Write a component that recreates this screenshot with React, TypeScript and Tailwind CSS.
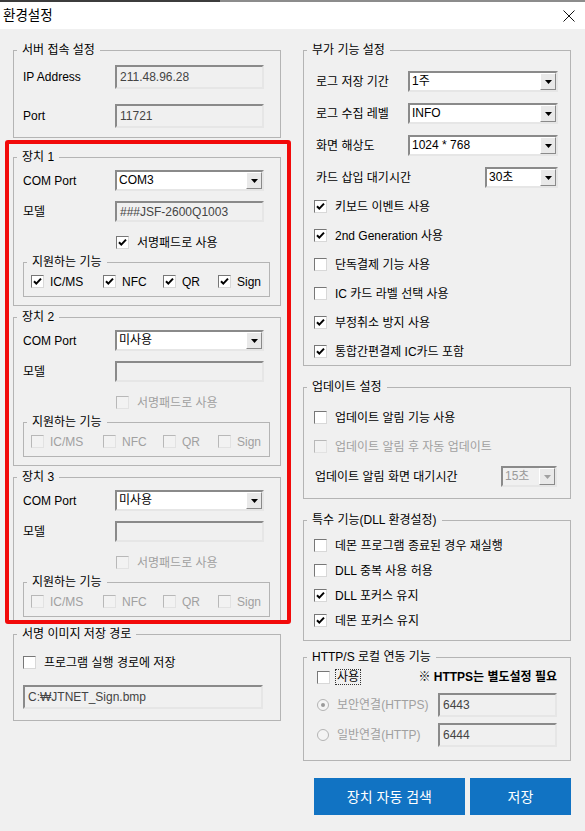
import React from 'react';

function GroupBox({ title, className = '', children }: { title: string; className?: string; children?: React.ReactNode }) {
  return (
    <div className={`relative border border-[#b4b4b4] ${className}`}>
      <span className="absolute left-[3px] top-[-8px] whitespace-nowrap bg-[#f0f0f0] px-[5px] leading-[14px]">{title}</span>
      {children}
    </div>
  );
}

function CheckBox({ checked = false, disabled = false }: { checked?: boolean; disabled?: boolean }) {
  return (
    <span
      className={`flex h-[13px] w-[13px] shrink-0 items-center justify-center border ${
        disabled
          ? 'border-t-[#b8b8b8] border-l-[#b8b8b8] border-b-[#e2e2e2] border-r-[#e2e2e2] bg-[#f2f2f2]'
          : 'border-t-[#777777] border-l-[#777777] border-b-[#d8d8d8] border-r-[#d8d8d8] bg-white'
      }`}
    >
      {checked && (
        <svg width="11" height="11" viewBox="0 0 11 11">
          <path d="M2 5.2 L4.3 7.6 L9 2.6" fill="none" stroke={disabled ? '#a0a0a0' : '#000'} strokeWidth="2" />
        </svg>
      )}
    </span>
  );
}

function Radio({ checked = false }: { checked?: boolean }) {
  return (
    <span className="flex h-[12px] w-[12px] shrink-0 items-center justify-center rounded-full border border-[#b4b4b4] bg-[#f4f4f4]">
      {checked && <span className="h-[4px] w-[4px] rounded-full bg-[#9a9a9a]" />}
    </span>
  );
}

function Select({ value, width, disabled = false }: { value: string; width: string; disabled?: boolean }) {
  return (
    <div
      className={`flex h-[21px] shrink-0 border-2 border-t-[#8a8a8a] border-l-[#8a8a8a] border-b-[#e6e6e6] border-r-[#e6e6e6] ${width} ${
        disabled ? 'bg-[#f0f0f0] text-[#9a9a9a]' : 'bg-white'
      }`}
    >
      <span className="flex-1 overflow-hidden whitespace-nowrap pl-[2px] leading-[17px]">{value}</span>
      <span className="flex w-[16px] items-center justify-center border border-t-white border-l-white border-b-[#8a8a8a] border-r-[#8a8a8a] bg-[#e9e9e9]">
        <svg width="7" height="4" viewBox="0 0 7 4">
          <path d="M0 0H7L3.5 4Z" fill={disabled ? '#a0a0a0' : '#000'} />
        </svg>
      </span>
    </div>
  );
}

function TextBox({ value = '', className = '' }: { value?: string; className?: string }) {
  return (
    <div
      className={`flex shrink-0 items-center border-2 border-t-[#8a8a8a] border-l-[#8a8a8a] border-b-[#e6e6e6] border-r-[#e6e6e6] bg-[#f0f0f0] pl-[3px] text-[#444] ${className}`}
    >
      {value}
    </div>
  );
}

function CheckRow({ label, checked = false, disabled = false, className = '' }: { label: string; checked?: boolean; disabled?: boolean; className?: string }) {
  return (
    <div className={`flex items-center gap-[8px] ${className}`}>
      <CheckBox checked={checked} disabled={disabled} />
      <span className={`whitespace-nowrap ${disabled ? 'text-[#a0a0a0]' : ''}`}>{label}</span>
    </div>
  );
}

function DeviceGroup({ n, port, model, enabled, className = '' }: { n: number; port: string; model: string; enabled: boolean; className?: string }) {
  const off = !enabled;
  const features = [
    { label: 'IC/MS', w: 'w-[72px]' },
    { label: 'NFC', w: 'w-[60px]' },
    { label: 'QR', w: 'w-[55px]' },
    { label: 'Sign', w: 'w-[50px]' },
  ];
  return (
    <GroupBox title={`장치 ${n}`} className={`h-[149px] w-[268px] shrink-0 ${className}`}>
      <div className="flex flex-col pl-[9px] pt-[12px]">
        <div className="flex h-[21px] items-center">
          <span className="w-[92px]">COM Port</span>
          <Select value={port} width="w-[149px]" />
        </div>
        <div className="mt-[10px] flex h-[21px] items-center">
          <span className="w-[92px]">모델</span>
          <TextBox value={model} className="h-[21px] w-[149px]" />
        </div>
        <CheckRow label="서명패드로 사용" checked={enabled} disabled={off} className="ml-[93px] mt-[14px] h-[13px]" />
        <GroupBox title="지원하는 기능" className="mt-[13px] h-[35px] w-[247px]">
          <div className="flex pl-[7px] pt-[12px]">
            {features.map((f) => (
              <div key={f.label} className={`flex h-[13px] items-center gap-[6px] ${f.w}`}>
                <CheckBox checked={enabled} disabled={off} />
                <span className={off ? 'text-[#a0a0a0]' : ''}>{f.label}</span>
              </div>
            ))}
          </div>
        </GroupBox>
      </div>
    </GroupBox>
  );
}

export default function App() {
  return (
    <div className="h-[831px] w-[585px] overflow-hidden bg-[#f0f0f0] font-['Liberation_Sans','Noto_Sans_CJK_KR',sans-serif] text-[12px] leading-[14px] text-black">
      {/* window frame */}
      <div className="flex h-[2px]">
        <div className="w-[220px] bg-[#3c3c3c]" />
        <div className="flex-1 bg-[#8c8c8c]" />
      </div>
      <div className="flex h-[27px] items-center justify-between bg-white pl-[3px] pr-[10px]">
        <span className="text-[13.5px]">환경설정</span>
        <svg width="12" height="12" viewBox="0 0 12 12">
          <path d="M0.5 0.5 L11.5 11.5 M11.5 0.5 L0.5 11.5" stroke="#111" strokeWidth="1" />
        </svg>
      </div>

      <div className="flex pl-[5px]">
        {/* left column */}
        <div className="flex w-[286px] shrink-0 flex-col">
          <GroupBox title="서버 접속 설정" className="ml-[8px] mt-[21px] h-[88px] w-[268px]">
            <div className="flex flex-col pl-[9px] pt-[14px]">
              <div className="flex h-[24px] items-center">
                <span className="w-[92px]">IP Address</span>
                <TextBox value="211.48.96.28" className="h-[24px] w-[149px]" />
              </div>
              <div className="mt-[15px] flex h-[24px] items-center">
                <span className="w-[92px]">Port</span>
                <TextBox value="11721" className="h-[24px] w-[149px]" />
              </div>
            </div>
          </GroupBox>

          <div className="mt-[2px] flex h-[484px] w-[286px] flex-col overflow-hidden rounded-[3px] border-4 border-[#f20a0a] pl-[4px] pt-[13px]">
            <DeviceGroup n={1} port="COM3" model="###JSF-2600Q1003" enabled />
            <DeviceGroup n={2} port="미사용" model="" enabled={false} className="mt-[11px]" />
            <DeviceGroup n={3} port="미사용" model="" enabled={false} className="mt-[11px]" />
          </div>

          <GroupBox title="서명 이미지 저장 경로" className="ml-[8px] mt-[10px] h-[87px] w-[268px]">
            <div className="flex flex-col pl-[9px] pt-[21px]">
              <CheckRow label="프로그램 실행 경로에 저장" className="h-[13px] gap-[7px]" />
              <TextBox value="C:₩JTNET_Sign.bmp" className="mt-[16px] h-[24px] w-[240px]" />
            </div>
          </GroupBox>
        </div>

        {/* right column */}
        <div className="ml-[12px] flex w-[268px] shrink-0 flex-col">
          <GroupBox title="부가 기능 설정" className="mt-[21px] h-[316px]">
            <div className="flex flex-col pl-[12px] pt-[20px]">
              <div className="flex w-[242px] flex-col gap-[11px]">
                <div className="flex h-[21px] items-center">
                  <span className="flex-1">로그 저장 기간</span>
                  <Select value="1주" width="w-[150px]" />
                </div>
                <div className="flex h-[21px] items-center">
                  <span className="flex-1">로그 수집 레벨</span>
                  <Select value="INFO" width="w-[150px]" />
                </div>
                <div className="flex h-[21px] items-center">
                  <span className="flex-1">화면 해상도</span>
                  <Select value="1024 * 768" width="w-[150px]" />
                </div>
                <div className="flex h-[21px] items-center">
                  <span className="flex-1">카드 삽입 대기시간</span>
                  <Select value="30초" width="w-[73px]" />
                </div>
              </div>
              <div className="-ml-[2px] mt-[4px] flex flex-col">
                <CheckRow label="키보드 이벤트 사용" checked className="h-[29px]" />
                <CheckRow label="2nd Generation 사용" checked className="h-[29px]" />
                <CheckRow label="단독결제 기능 사용" className="h-[29px]" />
                <CheckRow label="IC 카드 라벨 선택 사용" className="h-[29px]" />
                <CheckRow label="부정취소 방지 사용" checked className="h-[29px]" />
                <CheckRow label="통합간편결제 IC카드 포함" checked className="h-[29px]" />
              </div>
            </div>
          </GroupBox>

          <GroupBox title="업데이트 설정" className="mt-[21px] h-[112px]">
            <div className="flex flex-col pl-[10px] pt-[15px]">
              <CheckRow label="업데이트 알림 기능 사용" className="h-[29px]" />
              <CheckRow label="업데이트 알림 후 자동 업데이트" disabled className="h-[29px]" />
              <div className="ml-[1px] mt-[5px] flex h-[21px] w-[242px] items-center">
                <span className="flex-1">업데이트 알림 화면 대기시간</span>
                <Select value="15초" width="w-[56px]" disabled />
              </div>
            </div>
          </GroupBox>

          <GroupBox title="특수 기능(DLL 환경설정)" className="mt-[21px] h-[121px]">
            <div className="flex flex-col pl-[10px] pt-[12px]">
              <CheckRow label="데몬 프로그램 종료된 경우 재실행" className="h-[25px]" />
              <CheckRow label="DLL 중복 사용 허용" className="h-[25px]" />
              <CheckRow label="DLL 포커스 유지" checked className="h-[25px]" />
              <CheckRow label="데몬 포커스 유지" checked className="h-[25px]" />
            </div>
          </GroupBox>

          <GroupBox title="HTTP/S 로컬 연동 기능" className="mt-[16px] h-[104px]">
            <div className="flex flex-col pl-[13px] pr-[13px] pt-[9px]">
              <div className="flex h-[20px] items-center">
                <CheckBox />
                <span className="ml-[5px] border border-dotted border-[#333] px-[1px] leading-[14px]">사용</span>
                <span className="ml-auto font-bold">※ HTTPS는 별도설정 필요</span>
              </div>
              <div className="mt-[6px] flex h-[24px] items-center">
                <div className="flex w-[124px] items-center gap-[8px] text-[#a0a0a0]">
                  <Radio checked />
                  <span>보안연결(HTTPS)</span>
                </div>
                <TextBox value="6443" className="h-[24px] w-[119px] text-[#8a8a8a]" />
              </div>
              <div className="mt-[6px] flex h-[24px] items-center">
                <div className="flex w-[124px] items-center gap-[8px] text-[#a0a0a0]">
                  <Radio />
                  <span>일반연결(HTTP)</span>
                </div>
                <TextBox value="6444" className="h-[24px] w-[119px] text-[#8a8a8a]" />
              </div>
            </div>
          </GroupBox>

          <div className="ml-[11px] mt-[17px] flex gap-[5px]">
            <button className="flex h-[37px] w-[152px] items-center justify-center bg-[#1173c3] text-[14px] text-white">장치 자동 검색</button>
            <button className="flex h-[37px] w-[102px] items-center justify-center bg-[#1173c3] text-[14px] text-white">저장</button>
          </div>
        </div>
      </div>
    </div>
  );
}
